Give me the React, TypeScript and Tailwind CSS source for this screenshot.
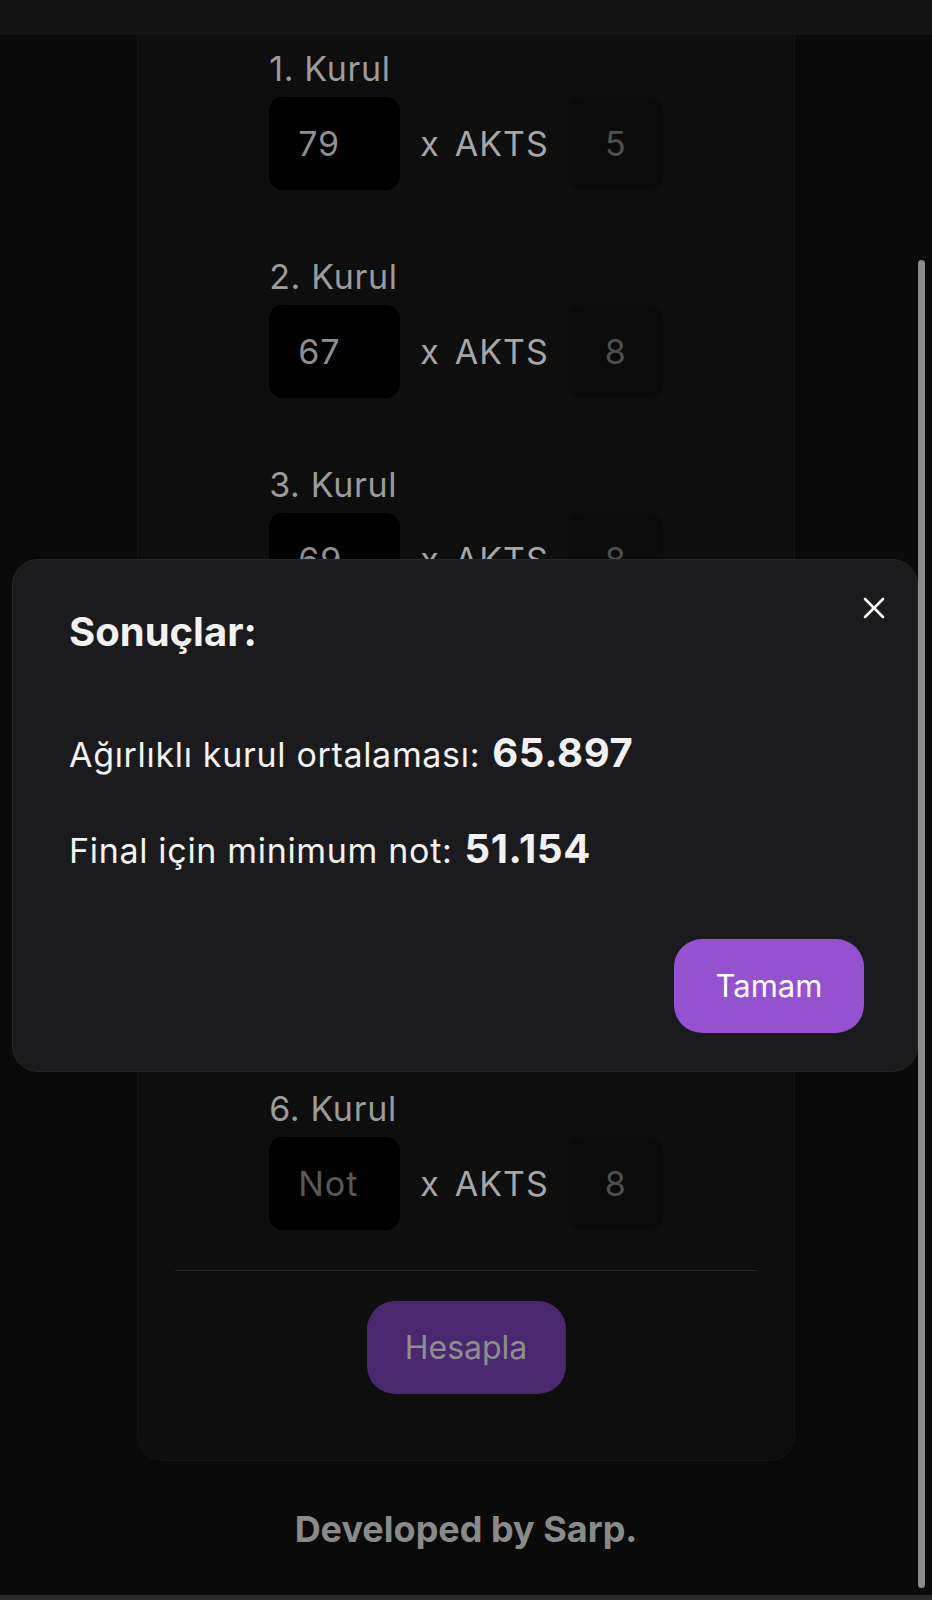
const kurullar = [
  { id: 1, not: '79', akts: '5' },
  { id: 2, not: '67', akts: '8' },
  { id: 3, not: '69', akts: '8' },
  { id: 4, not: '58', akts: '8' },
  { id: 5, not: '61', akts: '8' },
  { id: 6, not: '', akts: '8' },
];

const KurulRow = ({ id, not, akts }: { id: number; not: string; akts: string }) => (
  <div className="flex flex-col">
    <div className="h-[40px] leading-[40px] text-[34px] tracking-[0.02em] text-[#9b9b9b]">{id}. Kurul</div>
    <div className="mt-2 flex items-center">
      <div
        className={`w-[131px] h-[93px] rounded-[14px] bg-black pl-[29px] flex items-center text-[34px] tracking-[0.03em] ${
          not ? 'text-[#8f8f8f]' : 'text-[#5a5a5a]'
        }`}
      >
        {not || 'Not'}
      </div>
      <span className="ml-[20px] text-[34px] text-[#a6a6a6]">x</span>
      <span className="ml-[16px] text-[34px] tracking-[0.03em] text-[#a6a6a6]">AKTS</span>
      <div className="ml-[19px] w-[95px] h-[93px] rounded-[14px] bg-[#0b0b0b] flex items-center justify-center text-[34px] text-[#4f4f4f]">
        {akts}
      </div>
    </div>
  </div>
);

export default function App() {
  return (
    <div className="relative w-full h-[1600px] overflow-hidden bg-[#0a0a0a] font-[Inter,sans-serif]">
      <div className="h-[35px] bg-[#141414]" />

      {/* form card, scrolled so its top is hidden */}
      <div className="mx-auto w-[658px] rounded-b-[26px] border border-t-0 border-[#151515] bg-[#0e0e0e] pt-[14px] pb-[66px] flex flex-col">
        <div className="mx-auto w-fit flex flex-col gap-[67px]">
          {kurullar.map((k) => (
            <KurulRow key={k.id} {...k} />
          ))}
        </div>
        <div className="mt-[40px] mx-[37px] h-px bg-[#262626]" />
        <button className="mt-[30px] mx-auto w-[199px] h-[93px] rounded-[28px] bg-[#4a2870] text-[32px] text-[#8e8e8e]">
          Hesapla
        </button>
      </div>

      <div className="mt-[48px] h-[40px] leading-[40px] text-center text-[36px] font-bold text-[#8a8a8a]">
        Developed by Sarp.
      </div>

      {/* results dialog */}
      <div className="absolute left-[12px] top-[559px] w-[906px] h-[513px] rounded-[26px] border border-[#262628] bg-[#1b1b1d] pt-[48px] pl-[56px] pr-[53px] flex flex-col text-[#f2f2f2]">
        <button className="absolute right-[32px] top-[37px] w-[22px] h-[22px] text-white">
          <svg viewBox="0 0 22 22" className="w-full h-full" fill="none" stroke="currentColor" strokeWidth="2.6" strokeLinecap="round">
            <path d="M2 2 L20 20 M20 2 L2 20" />
          </svg>
        </button>
        <h2 className="leading-[48px] text-[40px] font-bold">Sonuçlar:</h2>
        <p className="mt-[67px] h-[48px] flex items-baseline gap-[12px] text-[34px] tracking-[0.02em]">
          <span>Ağırlıklı kurul ortalaması:</span>
          <span className="text-[40px] font-bold">65.897</span>
        </p>
        <p className="mt-[48px] h-[48px] flex items-baseline gap-[12px] text-[34px] tracking-[0.02em]">
          <span>Final için minimum not:</span>
          <span className="text-[40px] font-bold">51.154</span>
        </p>
        <button className="mt-[72px] self-end w-[190px] h-[94px] rounded-[28px] bg-[#9452d0] text-[31px] text-white">
          Tamam
        </button>
      </div>

      <div className="absolute right-[7px] top-[260px] w-[7px] h-[1328px] rounded-full bg-[#8a8a8a]" />
      <div className="absolute left-0 right-0 bottom-0 h-[5px] bg-[#2b2b2b]" />
    </div>
  );
}
